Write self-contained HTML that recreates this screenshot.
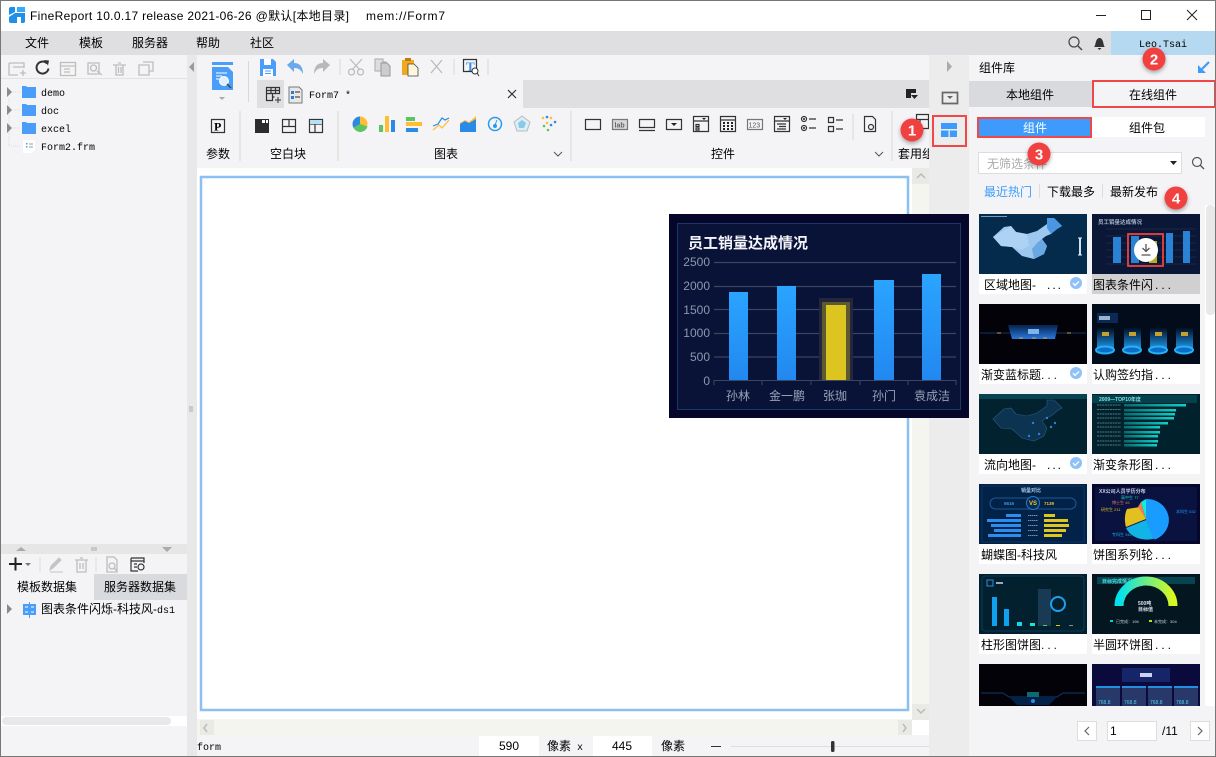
<!DOCTYPE html>
<html lang="zh"><head><meta charset="utf-8"><title>FineReport</title>
<style>
html,body{margin:0;padding:0;background:#fff;width:1216px;height:757px;overflow:hidden}
svg{display:block}
text{font-family:"Liberation Sans","Noto Sans CJK SC",sans-serif;font-size:12px;fill:#000}
.m{font-family:"Liberation Mono","Noto Sans CJK SC",monospace;font-size:10px}
.ic{fill:none;stroke:#333;stroke-width:1.2}
.g{fill:none;stroke:#bdbdbd;stroke-width:1.3}
.bl{fill:#4a9df8}
.badge{font-size:15px;font-weight:bold;fill:#fff;text-anchor:middle}
.tiny{font-size:4px;fill:#cfd8e6}
.ax{font-size:12px;fill:#8f97ad;text-anchor:end}
.xl{font-size:12px;fill:#98a0b6;text-anchor:middle}
</style></head><body>
<svg width="1216" height="757" viewBox="0 0 1216 757" xmlns="http://www.w3.org/2000/svg">
<defs>
<linearGradient id="bar" x1="0" y1="0" x2="0" y2="1"><stop offset="0" stop-color="#2aa4ff"/><stop offset="1" stop-color="#2288f0"/></linearGradient>
<linearGradient id="hd" x1="0" y1="0" x2="0" y2="1"><stop offset="0" stop-color="#06224a"/><stop offset="1" stop-color="#2a7ae0"/></linearGradient>
<linearGradient id="beam" x1="0" y1="0" x2="0" y2="1"><stop offset="0" stop-color="#021024"/><stop offset="1" stop-color="#1c90e0"/></linearGradient>
<linearGradient id="teal" x1="0" y1="0" x2="1" y2="0"><stop offset="0" stop-color="#066a6e"/><stop offset="1" stop-color="#10d0c8"/></linearGradient>
<linearGradient id="semi" x1="0" y1="0" x2="1" y2="0"><stop offset="0" stop-color="#00e0f0"/><stop offset="1" stop-color="#d8f820"/></linearGradient>
<filter id="sh" x="-40%" y="-40%" width="180%" height="180%"><feDropShadow dx="0" dy="2" stdDeviation="2" flood-color="#000" flood-opacity=".35"/></filter>
<clipPath id="list"><rect x="970" y="205" width="235" height="501"/></clipPath>
<g id="check"><circle r="6" fill="#8fc1f8"/><path d="M-3 0l2 2.4 4-4" fill="none" stroke="#fff" stroke-width="1.3"/></g>
<path id="china" d="M14 23l11-10 7-1 5 6 11 2 10-3 10-7V4h7l8 8-5 3-6 5-5 2-4 3 5 7-3 8-10 5-12-3-10-9-11-1z"/>
</defs>

<!-- Window base -->
<rect width="1216" height="757" fill="#f4f4f6"/>
<rect width="1216" height="31" fill="#fff"/>
<rect y="31" width="1216" height="24" fill="#dfdfe1"/>
<rect x="1111" y="31" width="105" height="24" fill="#b5d9f0"/>

<!-- Title bar -->
<rect x="9" y="7" width="16" height="16" rx="2" fill="#1f8fe8"/>
<path d="M15 7h2v6h-2zM15 13l-6 4v-2l6-3zM17 13h8v-1h-8zM17 17h4v6h-4z" fill="#fff"/>
<path d="M17 7h8v5h-8z" fill="#35aaf5"/>
<text x="30" y="20" textLength="319">FineReport 10.0.17 release 2021-06-26 @默认[本地目录]</text>
<text x="366" y="20" textLength="79">mem://Form7</text>
<path d="M1096 15.500h10M1141.500 10.500h9v9h-9zM1187 10l10 10M1197 10l-10 10" fill="none" stroke="#222" stroke-width="1"/>

<!-- Menu -->
<text x="25" y="47">文件</text><text x="79" y="47">模板</text><text x="132" y="47">服务器</text><text x="196" y="47">帮助</text><text x="250" y="47">社区</text>
<circle cx="1074" cy="42" r="5" fill="none" stroke="#444" stroke-width="1.2"/><path d="M1078 46l4 4" stroke="#444" stroke-width="1.4"/>
<path d="M1094 47c2-1 1-8 5-9 1 0 1 0 1 0 4 1 3 8 5 9zM1097.500 48h4l-2 2z" fill="#333"/>
<text class="m" x="1139" y="47">Leo.Tsai</text>

<!-- Left panel -->
<rect x="187" y="55" width="10" height="702" fill="#e8e8e9"/>
<path d="M194 62v10l-5-5z" fill="#9a9a9a"/>
<path d="M190 406v6M192 406v6" stroke="#aaa"/>
<rect x="1" y="78" width="186" height="1" fill="#e2e2e2"/>
<g class="g">
<path d="M9 63h15v5M9 63v12h9M13 67h11M20 73h6M23 70v6"/>
<path d="M60.500 62.500h15v13h-15zM60.500 66h15M64 69h6M64 72h6"/>
<path d="M88 63h11v11H88zM93.500 65a3 3 0 1 0 .01 0M97 71l5 4"/>
<path d="M113 65h13M116 65v10h7V65M118 63h3M118.500 67v6M121 67v6"/>
<path d="M139 65h10v10h-10zM143 62h10v9h-4"/>
</g>
<path d="M47 63.500a6 6 0 1 0 1.500 5" fill="none" stroke="#333" stroke-width="2"/><path d="M44 60l5 .5-1 5z" fill="#333"/>
<g stroke="#ddd" stroke-dasharray="1 1"><path d="M9 98v48M9 92h12M9 110h12M9 128h12M9 146h12"/></g>
<path d="M7 87v10l5-5zM7 105v10l5-5zM7 123v10l5-5z" fill="#8a8a8a"/>
<g class="bl"><path d="M22 86h4l1 1h9v11H22zM22 104h4l1 1h9v11H22zM22 122h4l1 1h9v11H22z"/></g>
<path d="M23 140h12v10l-3 3h-9z" fill="#fff"/><path d="M26 143h1.500v1.500H26zM26 146h1.500v1.500H26z" fill="#4a9df8"/><path d="M29 144h4M29 147h4" stroke="#999"/>
<text class="m" x="41" y="96">demo</text><text class="m" x="41" y="114">doc</text><text class="m" x="41" y="132">excel</text><text class="m" x="41" y="150">Form2.frm</text>

<rect x="1" y="544" width="186" height="10" fill="#e6e6e7"/>
<path d="M16 551l5-4 5 4zM162 547h10l-5 5z" fill="#aaa"/><path d="M91 548h6M91 550h6" stroke="#aaa"/>
<path d="M9 564h13M15.500 557.500v13" stroke="#222" stroke-width="2"/><path d="M25 563h6l-3 3z" fill="#777"/>
<path d="M40 557v15M96 557v15" stroke="#ddd"/>
<path d="M50 570l1-4 8-8 2 2-8 8zM50 572h13" fill="#c4c4c4" stroke="#c4c4c4"/>
<path class="g" d="M75 560h13M77 560v12h9v-12M80 558h3M80 563v6M83 563v6"/>
<path class="g" d="M107 557h7l3 3v12h-10zM114 568l3 3"/><circle cx="112" cy="566" r="3" class="g"/>
<path class="ic" d="M131 558h13v5M131 558v13h7M131 561h13M134 564h3M134 567h3"/><circle cx="141" cy="567" r="3" class="ic"/>
<rect x="94" y="574" width="93" height="26" fill="#d9dadd"/>
<text x="17" y="591">模板数据集</text><text x="104" y="591">服务器数据集</text>
<path d="M7 604v10l5-5z" fill="#8a8a8a"/>
<path d="M23 604h13v11H23z" fill="#4a9df8"/><path d="M29.500 602v16" stroke="#4a9df8"/><path d="M25 607h3M25 612h3M31 607h3M31 612h3" stroke="#fff"/>
<text x="41" y="613">图表条件闪烁-科技风-<tspan class="m" style="font-size:10px">ds1</tspan></text>
<rect x="1" y="716" width="186" height="10" fill="#fff"/><rect x="2" y="717" width="169" height="8" rx="4" fill="#e8e8e8"/>

<!-- Center toolbar -->
<path d="M212 62h21v3h-21zM212 67h16l5 5v18h-21z" fill="#4a9df8"/><path d="M216 73h11M216 76h6M216 79h5" stroke="#fff"/>
<circle cx="224" cy="81" r="4.500" fill="#dfefff" stroke="#fff"/><path d="M227 84l4 4" stroke="#444" stroke-width="1.400"/><path d="M219 97h6l-3 3z" fill="#aaa"/>
<path d="M248.500 61v41M340 59v16M454 59v16M488 59v16" stroke="#d8d8d8"/>
<path d="M260 59h13l3 3v14h-16z" fill="#4a9df8"/><path d="M264 59h7v6h-7z" fill="#fff"/><path d="M263 69h10v7h-10z" fill="#fff"/><path d="M265 71h6M265 73.500h6" stroke="#4a9df8"/>
<path d="M287 65l7-6v4c6 0 9 4 9 11-2-4-4-6-9-6v4z" fill="#6aa9ea"/>
<path d="M330 65l-7-6v4c-6 0-9 4-9 11 2-4 4-6 9-6v4z" fill="#b8b8b8"/>
<path class="g" d="M350 59l10 11M362 59l-10 11"/><circle cx="351.500" cy="72" r="3" class="g"/><circle cx="360.500" cy="72" r="3" class="g"/>
<path d="M375 59h8v3h3v9h-11z" fill="#ddd" stroke="#aaa"/><path d="M381 63h6l3 3v10h-9z" fill="#ccc" stroke="#999"/>
<path d="M402 60h12v15h-12z" fill="#f0aa20"/><path d="M405 58h6v3h-6z" fill="#c07a10"/><path d="M408 64h6l4 4v8h-10z" fill="#fdf7dc" stroke="#444" stroke-width=".8"/>
<path d="M431 60l11 13M442 60l-11 13" stroke="#bbb" stroke-width="1.300"/>
<path class="ic" d="M463.500 59.500h13v12h-13z"/><text x="466" y="71" style="font-family:'Liberation Serif';font-size:13px;font-weight:bold;fill:#3a8ee8">T</text><circle cx="475" cy="71" r="3" fill="#fff" stroke="#333"/><path d="M477 73l2 3" stroke="#333"/>

<!-- Tab row -->
<rect x="257" y="80" width="672" height="28" fill="#dfdfe1"/>
<rect x="284" y="80" width="239" height="28" fill="#f4f4f6"/>
<path class="ic" d="M266.500 87.500h13v6h-13zM266.500 93.500h6v7h-6zM271 87.500v6M275.500 87.500v6M266.500 90.500h13M272.500 97h2"/><path d="M275 100h6M278 97v6" stroke="#333"/>
<path d="M289 87h10l3 3v13h-13z" fill="#e8e8ea" stroke="#777"/><path d="M291 91h3v3h-3zM291 96h3v3h-3z" fill="#2a7ad8"/><path d="M295 92h5M295 97h5" stroke="#888" stroke-width="2"/>
<text class="m" x="309" y="98">Form7 *</text>
<path d="M508 90l8 8M516 90l-8 8" stroke="#333" stroke-width="1.200"/>
<path d="M906 89h10v4h-5v5h-5z" fill="#222"/><path d="M911 95h7l-3.500 4z" fill="#222"/>

<!-- Ribbon -->
<path d="M240 111v50M338 111v50M571 111v50M853 114v26M892 111v50" stroke="#e6e6e2" stroke-width="2"/>
<path class="ic" d="M211.500 119.500h13v13h-13z"/><text x="214" y="130.500" style="font-family:'Liberation Serif';font-size:12px;font-weight:bold">P</text>
<text x="206" y="158">参数</text><text x="270" y="158">空白块</text><text x="434" y="158">图表</text><text x="711" y="158">控件</text><text x="898" y="158">套用组</text>
<path d="M255 119h14v14h-14z" fill="#2c2c2c"/><path d="M262 120h3v3h-3zM266 120h2v3h-2z" fill="#fff"/>
<path class="ic" d="M282.500 119.500h13v13h-13zM282.500 126.500h13M289 119.500v7M309.500 119.500h13v13h-13zM309.500 124h13M315 124v8.500"/><path d="M310 120h12v4h-12z" fill="#b8e0f4"/>
<!-- chart icons -->
<circle cx="360" cy="124" r="7.500" fill="#ffbe32"/><path d="M360 124v-7.500a7.500 7.500 0 0 0-6.500 11.200z" fill="#2a8ae8"/><path d="M360 124l-6.500 3.700a7.500 7.500 0 0 0 14-1.200z" fill="#5cc460"/>
<path d="M379 125h4v7h-4z" fill="#5cc460"/><path d="M385 116h4v16h-4z" fill="#ffbe32"/><path d="M391 120h4v12h-4z" fill="#2a8ae8"/>
<path d="M406 117h9v4h-9z" fill="#5cc460"/><path d="M406 122h16v4h-16z" fill="#ffbe32"/><path d="M406 128h12v4h-12z" fill="#2a8ae8"/>
<path d="M433 130l6-5 3 3 7-8" fill="none" stroke="#ffbe32" stroke-width="1.200"/><path d="M433 126l5-2 4-6 3 2 4-2" fill="none" stroke="#2a8ae8" stroke-width="1.200"/>
<path d="M460 123l5-2 4 2 4-3 3-3v15h-16z" fill="#2a8ae8"/><path d="M460 123l5-3 4 2 7-6v3l-7 4-4-2-5 3z" fill="#ffbe32"/>
<circle cx="495" cy="124" r="6.500" fill="none" stroke="#2a9ae8" stroke-width="1.500"/><circle cx="495" cy="126" r="2" fill="#2a9ae8"/><path d="M495 125l2-5" stroke="#2a9ae8"/>
<path d="M522 116l8 6-3 9h-10l-3-9z" fill="#d8eef8" stroke="#bbb"/><path d="M522 120l4 3-2 5h-5l-1-5z" fill="#8cc8e8"/>
<g fill="#ffbe32"><circle cx="543" cy="118" r="1.300"/><circle cx="551" cy="118" r="1.300"/><circle cx="547" cy="123" r="1.300"/></g>
<g fill="#2a8ae8"><circle cx="547" cy="117" r="1.300"/><circle cx="555" cy="122" r="1.300"/><circle cx="551" cy="125" r="1.300"/></g>
<g fill="#5cc460"><circle cx="544" cy="126" r="1.300"/><circle cx="548" cy="130" r="1.300"/></g>
<path d="M554 152l4 4 4-4M875 152l4 4 4-4" fill="none" stroke="#555"/>
<!-- control icons -->
<g class="ic">
<path d="M585.500 119.500h15v10h-15z"/>
<path d="M612.500 119.500h15v10h-15z" fill="#d8d8d8" stroke="#777"/>
<path d="M639.500 119.500h15v8h-15zM639 130.500h16"/>
<path d="M666.500 119.500h15v10h-15z"/>
<path d="M693.500 116.500h15v15h-15zM693.500 121h15M696 124.500h3v2h-3zM696 128h3v2h-3z"/>
<path d="M720.500 116.500h15v15h-15zM720.500 120h15"/>
<path d="M747.500 119.500h15v10h-15z" stroke="#777"/>
<path d="M774.500 116.500h15v15h-15zM774.500 121h15M777 124h9M779 126.500h7M777 129h9"/>
<circle cx="804" cy="119" r="2.500"/><circle cx="804" cy="128" r="2.500"/><path d="M809 119h7M809 128h7"/>
<path d="M828.500 117.500h5v5h-5zM828.500 126.500h5v5h-5zM836 120h7M836 129h7"/>
<path d="M864.500 116.500h8l3 3v12h-11z"/><circle cx="871" cy="127" r="2.500"/>
<path d="M916.500 114.500h12v5h-12zM920 119.500h8.500v9H920z"/>
</g>
<text x="614.500" y="127.500" style="font-size:7px;font-weight:bold;fill:#666">lab</text>
<text x="748.500" y="127.500" style="font-size:7px;fill:#555">123</text>
<path d="M671 123h6l-3 3zM702 118h4l-2 2zM783 118h4l-2 2z" fill="#222"/>
<g fill="#222"><path d="M723 122h2v2h-2zM727 122h2v2h-2zM731 122h2v2h-2zM723 125h2v2h-2zM727 125h2v2h-2zM731 125h2v2h-2zM723 128h2v2h-2zM727 128h2v2h-2zM731 128h2v2h-2z"/><circle cx="804" cy="119" r="1"/><circle cx="804" cy="128" r="1"/></g>

<!-- Canvas -->
<rect x="197" y="168" width="732" height="567" fill="#fff"/>
<rect x="201" y="177" width="707" height="533" fill="#fff" stroke="#8cc0f0" stroke-width="2.500"/>
<rect x="912" y="168" width="17" height="552" fill="#f5f5f0"/>
<rect x="912" y="168" width="17" height="16" fill="#e9e9e6"/><rect x="912" y="704" width="17" height="16" fill="#e9e9e6"/>
<path d="M917 178l4-4 4 4M917 709l4 4 4-4" fill="none" stroke="#bbb" stroke-width="1.500"/>
<rect x="197" y="719" width="715" height="17" fill="#f5f5f0"/><rect x="200" y="720" width="14" height="15" fill="#e9e9e6"/><rect x="898" y="720" width="14" height="15" fill="#e9e9e6"/>
<path d="M207 724l-3 4 3 4M903 724l3 4-3 4" fill="none" stroke="#bbb" stroke-width="1.500"/>

<!-- Status bar -->
<rect x="197" y="736" width="732" height="20" fill="#f4f4f6"/>
<text class="m" x="197" y="750">form</text>
<rect x="479" y="736" width="60" height="20" fill="#fff"/><rect x="593" y="736" width="59" height="20" fill="#fff"/>
<text x="509" y="750" text-anchor="middle">590</text><text x="622" y="750" text-anchor="middle">445</text>
<text x="547" y="750">像素</text><text class="m" x="577" y="750">x</text><text x="661" y="750">像素</text>
<path d="M711 746.500h10" stroke="#333"/><path d="M731 746.500h198" stroke="#ddd"/><rect x="831" y="741" width="3.500" height="11" rx="1.500" fill="#333"/>

<!-- Right strip -->
<rect x="929" y="55" width="40" height="702" fill="#ececed"/>
<path d="M947 61v11l5-5.500z" fill="#aaa"/>
<path d="M942.500 92.500h15v11h-15z" fill="none" stroke="#666" stroke-width="1.700"/><path d="M947 96h6l-3 3z" fill="#666"/>
<rect x="933" y="116" width="33" height="30" fill="none" stroke="#f04848" stroke-width="2"/>
<path d="M941 123h16v6h-16zM941 130.500h7.500v6.500H941zM949.800 130.500h7.200v6.500h-7.200z" fill="#3e9bfb"/>

<!-- Right panel -->
<rect x="969" y="55" width="247" height="702" fill="#f4f4f6"/>
<text x="979" y="72">组件库</text>
<path d="M1209 62l-7 7" fill="none" stroke="#3e9bfb" stroke-width="2.200"/><path d="M1198 65v8h8z" fill="#3e9bfb"/>
<rect x="969" y="81" width="123" height="26" fill="#d9dadd"/>
<text x="1006" y="99">本地组件</text>
<rect x="1093" y="81" width="122" height="26" fill="#f4f4f6" stroke="#f04848" stroke-width="2"/>
<text x="1129" y="99">在线组件</text>
<rect x="1092" y="117" width="113" height="20" fill="#fff"/>
<rect x="978" y="118" width="113" height="19" fill="#3e9bfb" stroke="#f04848" stroke-width="2"/>
<text x="1035" y="132" text-anchor="middle" style="fill:#fff">组件</text>
<text x="1147" y="132" text-anchor="middle">组件包</text>
<rect x="978.500" y="152.500" width="203" height="21" fill="#fff" stroke="#ddd"/>
<text x="987" y="168" style="fill:#aaa">无筛选条件</text>
<path d="M1170 161h7l-3.500 4z" fill="#222"/>
<circle cx="1197" cy="162" r="4.500" fill="none" stroke="#555" stroke-width="1.200"/><path d="M1200 165l4 4" stroke="#555" stroke-width="1.300"/>
<text x="984" y="196" style="fill:#3e9bfb">最近热门</text><text x="1047" y="196">下载最多</text><text x="1110" y="196">最新发布</text>
<path d="M1039.500 184v14M1102.500 184v14" stroke="#ddd"/>
<rect x="1205" y="205" width="11" height="501" fill="#fff"/><rect x="1206" y="205" width="9" height="110" rx="4" fill="#e8e8e8"/>

<g clip-path="url(#list)">
<rect x="979" y="274" width="108" height="20" fill="#fff"/>
<rect x="1092" y="274" width="108" height="20" fill="#d0d0d0"/>
<rect x="979" y="304" width="108" height="80" fill="#fff"/><rect x="1092" y="304" width="108" height="80" fill="#fff"/>
<rect x="979" y="394" width="108" height="80" fill="#fff"/><rect x="1092" y="394" width="108" height="80" fill="#fff"/>
<rect x="979" y="484" width="108" height="80" fill="#fff"/><rect x="1092" y="484" width="108" height="80" fill="#fff"/>
<rect x="979" y="574" width="108" height="80" fill="#fff"/><rect x="1092" y="574" width="108" height="80" fill="#fff"/>

<!-- Row 1 -->
<g transform="translate(979,214)">
<rect width="108" height="60" fill="#042a4c"/>
<use href="#china" fill="#9cc8f0"/>
<path d="M55 45l-2-10 5-6 5-4 5 7-3 8z" fill="#6aa8e4"/>
<path d="M68 10V4h7l8 8-5 3-6 5-4-6z" fill="#4a96e2"/>
<path d="M32 12l5 6 11 2 2 12-8 4-9-3-11-1-8-9z" fill="#aed2f4"/>
<path d="M101 24v17" stroke="#cfe0f0" stroke-width="2"/><path d="M99 24h4M99 41h4" stroke="#eef"/>
<rect x="2" y="2" width="26" height="1" fill="#7a9ab8"/>
</g>
<g transform="translate(1092,214)">
<rect width="108" height="60" fill="#0a1736"/>
<text x="6" y="10" style="font-size:5.500px;fill:#a8b4c8;font-weight:bold">员工销量达成情况</text>
<path d="M14 15h90M14 22h90M14 29h90M14 36h90M14 43h90M14 50h90" stroke="#2c3a58" stroke-width=".6"/>
<g fill="#2a82d4"><rect x="21" y="23" width="8" height="26"/><rect x="39" y="22" width="8" height="27"/><rect x="74" y="19" width="7" height="30"/><rect x="91" y="17" width="7" height="32"/></g>
<rect x="57" y="27" width="8" height="22" fill="#c0a820"/>
<circle cx="54" cy="36" r="12" fill="#fff"/>
<path d="M54 30v7M50.500 34l3.500 3.500 3.500-3.500M49.500 41h9" fill="none" stroke="#555" stroke-width="1.300"/>
<rect x="36" y="20" width="35" height="32" fill="none" stroke="#f04040" stroke-width="1.800"/>
</g>
<!-- Row 2 -->
<g transform="translate(979,304)">
<rect width="108" height="60" fill="#020208"/>
<path d="M1 29h106" stroke="#124a88" stroke-width=".8"/>
<path d="M29 21h50l-3 14H33z" fill="url(#hd)"/>
<rect x="49" y="25" width="11" height="5" fill="#7eb4ee"/>
<path d="M18 29h4M88 29h4M40 34h4M53 34h4M64 34h4" stroke="#b8a860"/>
</g>
<g transform="translate(1092,304)">
<rect width="108" height="60" fill="#020c1a"/>
<rect x="5" y="9" width="21" height="10" fill="#0a2a55"/><rect x="7" y="12" width="11" height="4" fill="#9ab4d0"/>
<g id="beam1"><rect x="5" y="24" width="17" height="20" fill="url(#beam)"/><ellipse cx="13" cy="46" rx="9" ry="3.500" fill="#0a6ec8" stroke="#28b0f4" stroke-width="2"/><rect x="10" y="28" width="7" height="4" fill="#c8a030"/></g>
<use href="#beam1" x="27"/><use href="#beam1" x="53"/><use href="#beam1" x="79"/>
</g>
<!-- Row 3 -->
<g transform="translate(979,394)">
<rect width="108" height="60" fill="#03222f"/>
<rect width="108" height="5" fill="#064452"/>
<g transform="translate(0,2)"><use href="#china" fill="#0c3350" stroke="#2a5a80" stroke-width=".6"/></g>
<g fill="#2e80d8"><circle cx="54" cy="29" r="1.200"/><circle cx="68" cy="24" r="1.200"/><circle cx="72" cy="33" r="1.200"/><circle cx="60" cy="40" r="1.200"/><circle cx="50" cy="42" r="1.200"/><circle cx="76" cy="29" r="1.200"/></g>
</g>
<g transform="translate(1092,394)">
<rect width="108" height="60" fill="#01212c"/>
<rect x="0" y="1" width="105" height="8" fill="#05404c"/>
<text x="7" y="7" style="font-size:5px;fill:#7ee0e0;font-weight:bold">2009—TOP10年度</text>
<g fill="url(#teal)"><rect x="32" y="10" width="62" height="2.500"/><rect x="32" y="15" width="52" height="2.500"/><rect x="32" y="19" width="51" height="2.500"/><rect x="32" y="23" width="50" height="2.500"/><rect x="32" y="28" width="44" height="2.500"/><rect x="32" y="32" width="36" height="2.500"/><rect x="32" y="37" width="36" height="2.500"/><rect x="32" y="41" width="34" height="2.500"/><rect x="32" y="46" width="34" height="2.500"/><rect x="32" y="50" width="33" height="2.500"/></g>
<path d="M5 11h24M5 15.500h24M5 20h24M5 24h24M5 29h24M5 33h24M5 38h24M5 42h24M5 47h24M5 51h24" stroke="#4a7a80" stroke-width="1" stroke-dasharray="2 .6"/>
</g>
<!-- Row 4 -->
<g transform="translate(979,484)">
<rect width="108" height="60" fill="#032248"/>
<rect x="3" y="2" width="102" height="56" fill="none" stroke="#0a3a68" stroke-width=".8"/>
<text x="42" y="8" style="font-size:5px;fill:#a8c8e8;font-weight:bold">销量对比</text>
<rect x="11" y="14" width="86" height="11" rx="5.500" fill="none" stroke="#1a5a98"/>
<circle cx="54" cy="19" r="6.500" fill="#062c58" stroke="#2a7ac8"/>
<text x="50" y="21" style="font-size:6px;fill:#e8c830;font-weight:bold">VS</text>
<text x="25" y="21" style="font-size:4.500px;fill:#3a9af0;font-weight:bold">5616</text><text x="65" y="21" style="font-size:4.500px;fill:#e8c830;font-weight:bold">7139</text>
<g fill="#2a8ef0"><rect x="27" y="30" width="15" height="3"/><rect x="8" y="35" width="34" height="3"/><rect x="12" y="40" width="30" height="3"/><rect x="15" y="45" width="27" height="3"/><rect x="9" y="50" width="33" height="3"/></g>
<g fill="#e0c420"><rect x="65" y="30" width="11" height="3"/><rect x="65" y="35" width="24" height="3"/><rect x="65" y="40" width="25" height="3"/><rect x="65" y="45" width="22" height="3"/><rect x="65" y="50" width="18" height="3"/></g>
<path d="M49 31.500h10M49 36.500h10M49 41.500h10M49 46.500h10M49 51.500h10" stroke="#7a8ea8" stroke-dasharray="1.500 .5"/>
</g>
<g transform="translate(1092,484)">
<rect width="108" height="60" fill="#05072c"/><rect x="3" y="3" width="102" height="54" fill="#0a1340"/>
<text x="7" y="9" style="font-size:5px;fill:#c8d0e0;font-weight:bold">XX公司人员学历分布</text>
<path d="M54 15a22 21 0 0 1 9 40.500l-3-1.500-6-18z" fill="#189cff"/>
<path d="M54 36l7 19c-10 2-22-1-27-11z" fill="#12b4e8"/>
<path d="M54 35l-20 8c-2-7-1-14 1-18l13-2z" fill="#e2c020"/>
<path d="M54 35l-8-12 3-5z" fill="#f07a60"/>
<path d="M54 35l-5-17 5-3z" fill="#10f0d0"/>
<text x="29" y="15" style="font-size:4px;fill:#10e0c0">高中生 77</text><text x="20" y="20" style="font-size:4px;fill:#f07a60">博士生 45</text><text x="9" y="27" style="font-size:4px;fill:#e2c020">研究生 211</text><text x="20" y="52" style="font-size:4px;fill:#12b4e8">专科生 342</text><text x="84" y="29" style="font-size:4px;fill:#189cff">本科生 532</text>
</g>
<!-- Row 5 -->
<g transform="translate(979,574)">
<rect width="108" height="60" fill="#03202f"/>
<rect x="3" y="2" width="102" height="55" rx="3" fill="none" stroke="#0a4468" stroke-width=".8"/>
<rect x="8" y="6" width="6" height="6" fill="none" stroke="#2a8ee0"/><rect x="17" y="8" width="7" height="2" fill="#9ab"/>
<rect x="59" y="15" width="13" height="37" fill="#183a54"/>
<rect x="13" y="23" width="5" height="29" fill="#10a0f0"/><rect x="25" y="35" width="5" height="17" fill="#10a0f0"/><rect x="38" y="48" width="5" height="4" fill="#10d8f0"/><rect x="51" y="49" width="5" height="3" fill="#10e8d8"/><rect x="64" y="51" width="4" height="1" fill="#5cc460"/><rect x="77" y="51" width="4" height="1" fill="#e0c420"/><rect x="90" y="51" width="4" height="1" fill="#888"/>
<circle cx="79" cy="30" r="7" fill="none" stroke="#1ca0f0" stroke-width="2"/>
</g>
<g transform="translate(1092,574)">
<rect width="108" height="60" fill="#04161f"/>
<rect x="5" y="3" width="98" height="7" fill="#064452"/>
<text x="10" y="9" style="font-size:5px;fill:#50e0e0;font-weight:bold">目标完成情况</text>
<path d="M27 32a27 25 0 0 1 54 0" fill="none" stroke="url(#semi)" stroke-width="9"/>
<text x="46" y="31" style="font-size:5px;fill:#d8e0e8;font-weight:bold">500吨</text><text x="46" y="37" style="font-size:5px;fill:#d8e0e8;font-weight:bold">目标值</text>
<rect x="18" y="46" width="3" height="2" fill="#00c8e8"/><text x="24" y="49" class="tiny">已完成：196</text><rect x="57" y="46" width="3" height="2" fill="#b8e020"/><text x="62" y="49" class="tiny">未完成：304</text>
</g>
<!-- Row 6 -->
<g transform="translate(979,664)">
<rect width="108" height="42" fill="#020208"/>
<path d="M2 29h22l6 4h48l6-4h22" fill="none" stroke="#103a68"/>
<path d="M30 33h48l-8 8H38z" fill="#03224a"/><rect x="48" y="28" width="12" height="5" fill="#0e6a70"/><circle cx="54" cy="37" r="2" fill="#2a8ae8"/>
</g>
<g transform="translate(1092,664)">
<rect width="108" height="42" fill="#0b0a3c"/>
<rect x="30" y="4" width="48" height="14" fill="#16246a"/><rect x="48" y="9" width="12" height="4" fill="#c8d4ee"/>
<g id="cardx"><rect x="4" y="22" width="24" height="20" fill="#283868"/><rect x="4" y="22" width="24" height="2" fill="#2090e0"/><text x="6" y="40" style="font-size:5px;fill:#50d0f0">768.8</text></g>
<use href="#cardx" x="26"/><use href="#cardx" x="52"/><use href="#cardx" x="78"/>
</g>

<!-- Card labels -->
<text x="984" y="289">区域地图-</text><text x="1047" y="289" style="letter-spacing:2px">...</text>
<text x="1093" y="289">图表条件闪</text><text x="1155" y="289" style="letter-spacing:3px">...</text>
<text x="981" y="379">渐变蓝标题</text><text x="1041" y="379" style="letter-spacing:3px;fill:#303">...</text>
<text x="1093" y="379">认购签约指</text><text x="1155" y="379" style="letter-spacing:3px">...</text>
<text x="984" y="469">流向地图-</text><text x="1047" y="469" style="letter-spacing:2px">...</text>
<text x="1093" y="469">渐变条形图</text><text x="1155" y="469" style="letter-spacing:3px">...</text>
<text x="981" y="559">蝴蝶图-科技风</text>
<text x="1093" y="559">饼图系列轮</text><text x="1155" y="559" style="letter-spacing:3px">...</text>
<text x="981" y="649">柱形图饼图</text><text x="1041" y="649" style="letter-spacing:3px;fill:#303">...</text>
<text x="1093" y="649">半圆环饼图</text><text x="1155" y="649" style="letter-spacing:3px">...</text>
<use href="#check" x="1076" y="283"/><use href="#check" x="1076" y="373"/><use href="#check" x="1076" y="463"/>
</g>

<!-- Pagination -->
<rect x="1077.500" y="721.500" width="19" height="19" fill="#fff" stroke="#ddd"/><path d="M1089 727l-4 4 4 4" fill="none" stroke="#666" stroke-width="1.200"/>
<rect x="1107.500" y="721.500" width="49" height="19" fill="#fff" stroke="#ddd"/><text x="1110" y="735">1</text>
<text x="1162" y="735">/11</text>
<rect x="1190.500" y="721.500" width="19" height="19" fill="#fff" stroke="#ddd"/><path d="M1198 727l4 4-4 4" fill="none" stroke="#666" stroke-width="1.200"/>

<!-- Window border -->
<rect x=".5" y=".5" width="1215" height="756" fill="none" stroke="#777"/>

<!-- Floating preview -->
<rect x="669" y="214" width="300" height="204" fill="#05062a"/>
<rect x="677.500" y="223.500" width="283" height="186" fill="#091338" stroke="#173a66"/>
<text x="688" y="248" style="font-size:15px;font-weight:bold;fill:#f4f4fa">员工销量达成情况</text>
<path d="M714 262.500h242M714 286.500h242M714 309.500h242M714 333.500h242M714 357h242" stroke="#3a4660" stroke-width="1.200"/>
<path d="M714 380.500h242M714 380v5M762 380v5M811 380v5M860 380v5M908 380v5M956 380v5" stroke="#3a4660" fill="none"/>
<text class="ax" x="710" y="266">2500</text><text class="ax" x="710" y="290">2000</text><text class="ax" x="710" y="314">1500</text><text class="ax" x="710" y="337">1000</text><text class="ax" x="710" y="361">500</text><text class="ax" x="710" y="385">0</text>
<rect x="729" y="292" width="19" height="88" fill="url(#bar)"/>
<rect x="777" y="286" width="19" height="94" fill="url(#bar)"/>
<rect x="819" y="298" width="34" height="82" fill="#23263c"/>
<rect x="822" y="302" width="28" height="78" fill="#5e5a30"/>
<rect x="826" y="305" width="20" height="75" fill="#dcc520"/>
<rect x="874" y="280" width="20" height="100" fill="url(#bar)"/>
<rect x="922" y="274" width="19" height="106" fill="url(#bar)"/>
<text class="xl" x="738" y="400">孙林</text><text class="xl" x="787" y="400">金一鹏</text><text class="xl" x="835" y="400">张珈</text><text class="xl" x="884" y="400">孙门</text><text class="xl" x="932" y="400">袁成洁</text>

<!-- Numbered badges -->
<g filter="url(#sh)"><circle cx="912" cy="130" r="11.500" fill="#f04040"/><circle cx="1154" cy="59" r="11.500" fill="#f04040"/><circle cx="1039" cy="154" r="11.500" fill="#f04040"/><circle cx="1176" cy="198" r="11.500" fill="#f04040"/></g>
<text class="badge" x="912" y="135.500">1</text><text class="badge" x="1154" y="64.500">2</text><text class="badge" x="1039" y="159.500">3</text><text class="badge" x="1176" y="203.500">4</text>
</svg>
</body></html>
